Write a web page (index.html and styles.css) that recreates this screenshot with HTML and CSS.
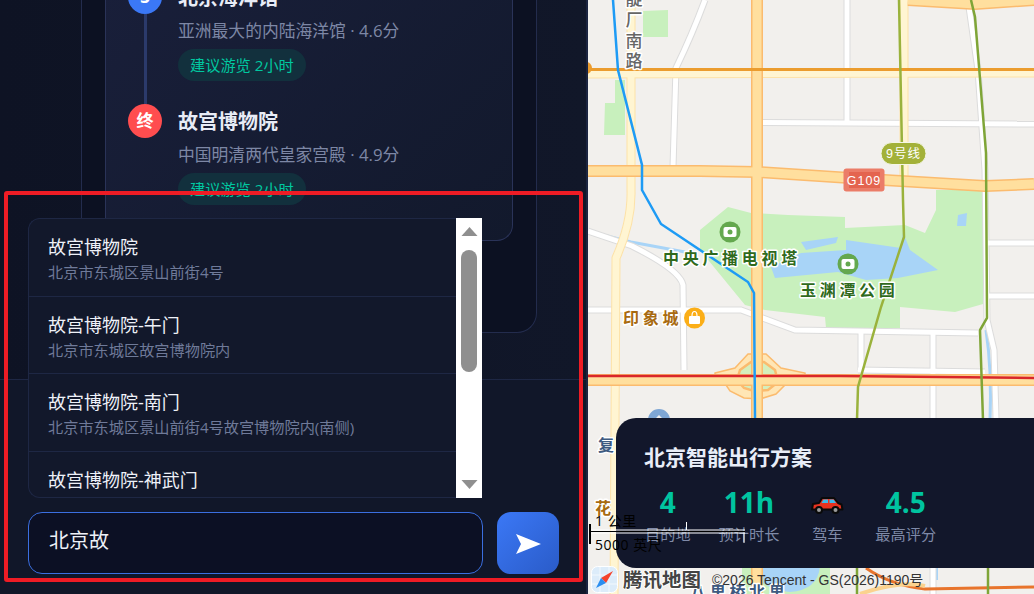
FILE: index.html
```html
<!DOCTYPE html>
<html>
<head>
    <title>北京智能出行方案</title>
    <link rel="stylesheet" href="styles.css">
</head>
<body>
    <div class="app">
        <div class="panel">
            <div class="chat-area">
                <div class="outer-card">
                    <div class="route-card">
                        <div class="stop">
                            <div class="stop-marker">
                                <div class="stop-dot">3</div>
                                <div class="stop-line"></div>
                            </div>
                            <div class="stop-info">
                                <h3>北京海洋馆</h3>
                                <p>亚洲最大的内陆海洋馆 · 4.6分</p>
                                <span class="tag">建议游览 2小时</span>
                            </div>
                        </div>
                        <div class="stop">
                            <div class="stop-marker">
                                <div class="stop-dot stop-dot-end">终</div>
                            </div>
                            <div class="stop-info">
                                <h3>故宫博物院</h3>
                                <p>中国明清两代皇家宫殿 · 4.9分</p>
                                <span class="tag">建议游览 2小时</span>
                            </div>
                        </div>
                    </div>
                </div>
            </div>

            <div class="input-area">
                <div class="suggest-box">
                    <div class="suggest-list">
                        <div class="suggest-item">
                            <div class="suggest-name">故宫博物院</div>
                            <div class="suggest-addr">北京市东城区景山前街4号</div>
                        </div>
                        <div class="suggest-item">
                            <div class="suggest-name">故宫博物院-午门</div>
                            <div class="suggest-addr">北京市东城区故宫博物院内</div>
                        </div>
                        <div class="suggest-item">
                            <div class="suggest-name">故宫博物院-南门</div>
                            <div class="suggest-addr">北京市东城区景山前街4号故宫博物院内(南侧)</div>
                        </div>
                        <div class="suggest-item">
                            <div class="suggest-name">故宫博物院-神武门</div>
                            <div class="suggest-addr">北京市东城区景山前街4号</div>
                        </div>
                    </div>
                    <div class="scrollbar">
                        <svg class="scroll-arrow" viewBox="0 0 16 9"><path d="M8 0 L16 9 L0 9 Z"/></svg>
                        <div class="scroll-track"><div class="scroll-thumb"></div></div>
                        <svg class="scroll-arrow" viewBox="0 0 16 9"><path d="M0 0 L16 0 L8 9 Z"/></svg>
                    </div>
                </div>
                <div class="input-row">
                    <div class="text-input">北京故</div>
                    <button class="send-btn">
                        <svg viewBox="0 0 25 20" width="25" height="20"><path d="M0 0 L25 10 L0 20 L5 10 Z"/></svg>
                    </button>
                </div>
            </div>
            <div class="panel-edge"></div>
        </div>

        <div class="map">
            <svg class="map-canvas" viewBox="588 0 446 594" width="446" height="594">
                <!-- parks and water -->
                <g class="park">
                    <path d="M643 11 L668 10 L668 37 L643 37 Z"/>
                    <path d="M605 103 L615 103 L615 80 L625 80 L625 135 L604 135 Z"/>
                    <path d="M700 230 L728 207 L751 213 L788 215 L845 217 L845 228 L905 225 L925 233 L936 210 L936 190 L983 190 L983 304 L955 312 L900 307 L900 328 L826 328 L825 317 L765 310 L745 305 L700 250 Z"/>
                    <path d="M742 560 L830 568 L830 594 L742 594 Z"/>
                </g>
                <g class="water">
                    <path d="M801 242 L838 237 L836 243 L806 250 Z"/>
                    <path d="M846 240 L901 248 L903 232 L910 250 L938 270 L898 278 L866 280 L838 272 L775 278 L771 267 L801 253 L846 250 Z"/>
                    <path d="M958 215 L967 213 L966 226 L957 226 Z"/>
                    <path d="M932 565 L938 565 L938 580 L932 580 Z"/>
                    <path d="M750 566 L820 566 Q818 590 790 592 Q760 590 750 566 Z"/>
                </g>
                <path class="canal" d="M591 232 L631 242 L685 252"/>
                <path class="canal" d="M986 330 Q992 370 990 420"/>

                <!-- white streets -->
                <g class="street-case">
                    <path d="M705 0 Q692 35 676 68 L673 167"/>
                    <path d="M847 0 L847 122"/>
                    <path d="M763 122.5 L1034 124"/>
                    <path d="M968 0 L978 70 L985 170 L987 320 L994 350 L996 418"/>
                    <path d="M588 231 L632 246 Q680 270 683 285 L684 370"/>
                    <path d="M588 310 L741 310 L795 330 L978 333"/>
                    <path d="M861 333 L861 370"/>
                    <path d="M933 333 L933 420"/>
                    <path d="M858 370 L985 372"/>
                    <path d="M987 243 L1034 243"/>
                    <path d="M987 296 L1034 296"/>
                    <path d="M933 568 L933 594"/>
                </g>
                <g class="street">
                    <path d="M705 0 Q692 35 676 68 L673 167"/>
                    <path d="M847 0 L847 122"/>
                    <path d="M763 122.5 L1034 124"/>
                    <path d="M968 0 L978 70 L985 170 L987 320 L994 350 L996 418"/>
                    <path d="M588 231 L632 246 Q680 270 683 285 L684 370"/>
                    <path d="M588 310 L741 310 L795 330 L978 333"/>
                    <path d="M861 333 L861 370"/>
                    <path d="M933 333 L933 420"/>
                    <path d="M858 370 L985 372"/>
                    <path d="M987 243 L1034 243"/>
                    <path d="M987 296 L1034 296"/>
                    <path d="M933 568 L933 594"/>
                </g>

                <!-- yellow roads -->
                <g class="road-pale-case">
                    <path d="M631 0 L631 190 Q632 222 616 258 L614 594"/>
                    <path d="M904 0 L904 180"/>
                    <path d="M588 74 L1034 73"/>
                </g>
                <g class="road-pale">
                    <path d="M631 0 L631 190 Q632 222 616 258 L614 594"/>
                    <path d="M904 0 L904 180"/>
                    <path d="M588 74 L1034 73"/>
                </g>

                <!-- roundabout -->
                <path class="ring-outer" d="M715 373 L735 368 L748 354 L766 354 L781 368 L805 373 L805 380 L788 382 L776 394 L760 399 L744 398 L730 391 L724 382 L715 380 Z"/>
                <path class="ring-inner" d="M740 370 L751 362 L764 362 L775 370 L778 382 L768 390 L754 391 L744 388 L737 380 Z"/>

                <g class="road-case">
                    <path d="M588 171 L700 171 L757 172 L850 178 L985 186 L1034 184"/>
                    <path d="M908 0 L975 4 L1034 0"/>
                    <path d="M588 380 L1034 380"/>
                    <path d="M757 0 L757 594"/>
                </g>
                <g class="road">
                    <path d="M588 171 L700 171 L757 172 L850 178 L985 186 L1034 184"/>
                    <path d="M908 0 L975 4 L1034 0"/>
                    <path d="M588 380 L1034 380"/>
                    <path d="M757 0 L757 594"/>
                </g>
                <path class="road-orange" d="M588 69.5 L1034 69.5"/>
                <path class="road-red" d="M588 376 L840 376 L1034 378"/>
                <path class="road-deep" d="M866 568 Q890 585 925 589 L1034 587"/>
                <path class="road-thin" d="M860 594 Q900 580 925 586"/>

                <!-- subway lines -->
                <path class="line-blue" d="M613 0 L618 70 L642 165 L642 190 L661 224 L748 282 L754 293 L755 418"/>
                <path class="line-green" d="M899 0 L903 200 L904 237 L881 307 L858 387 L857 420"/>
                <path class="line-olive" d="M971 0 L975 17 L986 153 L987 318 L980 330 L983 420"/>
                <path class="line-olive" d="M857 568 L857 594"/>
                <path class="line-olive" d="M988 568 L988 594"/>

                <!-- poi -->
                <circle class="poi-dot" cx="586" cy="68" r="6"/>
                <g class="poi-green">
                    <circle cx="730" cy="232" r="10.5"/>
                    <circle cx="848" cy="264" r="10.5"/>
                </g>
                <g class="poi-camera">
                    <rect x="723.5" y="227" width="13" height="10" rx="2"/>
                    <rect x="841.5" y="259" width="13" height="10" rx="2"/>
                </g>
                <g class="poi-lens">
                    <circle cx="730" cy="232" r="2.5"/>
                    <circle cx="848" cy="264" r="2.5"/>
                </g>
                <circle class="poi-shop" cx="694.5" cy="318" r="10.5"/>
                <rect class="poi-bag" x="689" y="316" width="11" height="8" rx="1"/>
                <path class="poi-bag-handle" d="M692 316 Q692 311.5 694.5 311.5 Q697 311.5 697 316"/>
                <path class="poi-pin" d="M648 420 A11 11 0 0 1 670 420 L664 420 L659 415 L654 420 Z"/>

                <!-- labels -->
                <g class="label label-grey">
                    <text x="634" y="5">靛</text>
                    <text x="634" y="26">厂</text>
                    <text x="634" y="47">南</text>
                    <text x="634" y="67">路</text>
                </g>
                <text class="label label-green" x="663" y="264">中央广播电视塔</text>
                <text class="label label-green" x="800" y="296">玉渊潭公园</text>
                <text class="label label-brown" x="623" y="324">印象城</text>
                <text class="label label-navy" x="598" y="451">复</text>
                <text class="label label-brown" x="595" y="514">花</text>
                <text class="label label-navy" x="690" y="598">八里桥北里</text>

                <!-- badges -->
                <rect class="badge-line" x="881" y="142.5" width="45" height="22" rx="11"/>
                <text class="badge-text" x="903.5" y="158">9号线</text>
                <rect class="badge-road" x="843.5" y="168.5" width="41" height="23" rx="3"/>
                <rect class="badge-road-inner" x="849" y="172" width="31" height="16"/>
                <text class="badge-text" x="864" y="185">G109</text>
            </svg>

            <div class="info-card">
                <h2>北京智能出行方案</h2>
                <div class="stats">
                    <div class="stat">
                        <div class="stat-value">4</div>
                        <div class="stat-label">目的地</div>
                    </div>
                    <div class="stat">
                        <div class="stat-value">11h</div>
                        <div class="stat-label">预计时长</div>
                    </div>
                    <div class="stat stat-car">
                        <div class="stat-value">
                            <svg class="car" viewBox="0 0 34 19" width="34" height="19">
                                <path class="car-body" d="M3 9 L9 8 L12 3 L24 3 L28 8 L31.500 9.500 L32.500 14.500 L2 14.500 Z"/>
                                <path class="car-window" d="M11.500 8 L13.500 4.500 L18 4.500 L18 8 Z"/>
                                <path class="car-window" d="M19.500 4.500 L23.500 4.500 L26 8 L19.500 8 Z"/>
                                <circle class="car-wheel" cx="9" cy="15" r="3"/>
                                <circle class="car-wheel" cx="25.500" cy="15" r="3"/>
                            </svg>
                        </div>
                        <div class="stat-label">驾车</div>
                    </div>
                    <div class="stat">
                        <div class="stat-value">4.5</div>
                        <div class="stat-label">最高评分</div>
                    </div>
                </div>
            </div>

            <svg class="scale" viewBox="0 0 160 34" width="160" height="34">
                <path class="scale-halo" d="M2 11 L157 11 M2 14 L157 14 M98.500 3 L98.500 11 M156 14 L156 24"/>
                <path class="scale-line" d="M2 12.500 L157 12.500"/>
                <path class="scale-end" d="M2 5 L2 25"/>
            </svg>
            <div class="scale-text scale-km">1 公里</div>
            <div class="scale-text scale-ft">5000 英尺</div>

            <div class="map-logo">
                <svg viewBox="0 0 27 27" width="27" height="27">
                    <rect class="logo-bg" x="0.500" y="0.500" width="26" height="26" rx="6"/>
                    <path class="logo-grid" d="M9 1 L9 26 M18 1 L18 26 M1 9 L26 9 M1 18 L26 18"/>
                    <path class="logo-red" d="M22 5 L10 12 L15 17 Z"/>
                    <path class="logo-blue" d="M5 22 L10 12 L15 17 Z"/>
                </svg>
                <span class="logo-name">腾讯地图</span>
            </div>
            <div class="copyright">©2026 Tencent - GS(2026)1190号</div>
        </div>

        <div class="highlight"></div>
    </div>
</body>
</html>
```

FILE: styles.css
```css
* {
    margin: 0;
    padding: 0;
    box-sizing: border-box;
    font-family: "Open Sans", "Noto Sans CJK SC", sans-serif;
}

body {
    background: #111729;
    overflow: hidden;
}

.app {
    position: relative;
    display: flex;
    width: 1034px;
    height: 594px;
    overflow: hidden;
}

/* left panel */
.panel {
    position: relative;
    width: 588px;
    height: 594px;
    display: flex;
    flex-direction: column;
    background: #111729;
}

.panel-edge {
    position: absolute;
    top: 0;
    right: 0;
    width: 2px;
    height: 100%;
    background: #1b2440;
}

.chat-area {
    height: 379px;
    overflow: hidden;
    padding-left: 81px;
    padding-right: 51px;
    background: linear-gradient(90deg, #0e1324, #111729);
}

.outer-card {
    display: flow-root;
    height: 333px;
    padding: 0 23px;
    background: #0c1122;
    border: 1px solid #232c4d;
    border-top: none;
    border-radius: 0 0 20px 20px;
}

.route-card {
    height: 261px;
    margin-top: -20px;
    padding-left: 22px;
    background: linear-gradient(135deg, #191f3a, #12192c);
    border: 1px solid #2a3358;
    border-top: none;
    border-radius: 0 0 16px 16px;
}

.stop {
    display: flex;
    gap: 16px;
    height: 124px;
}

.stop-marker {
    display: flex;
    flex-direction: column;
    align-items: center;
    width: 34px;
}

.stop-dot {
    flex: none;
    width: 34px;
    height: 34px;
    border-radius: 50%;
    background: #3b78f6;
    color: white;
    font-size: 17px;
    font-weight: 700;
    line-height: 34px;
    text-align: center;
}

.stop-dot-end {
    background: #ff4d4f;
}

.stop-line {
    flex: 1;
    width: 3px;
    background: #2b3a6b;
}

.stop-info h3 {
    height: 34px;
    padding-top: 1px;
    color: #e8ecf6;
    font-size: 20px;
    font-weight: 700;
    line-height: 34px;
}

.stop-info p {
    margin-top: 5px;
    color: #7d87a5;
    font-size: 16.800px;
    line-height: 24px;
}

.tag {
    display: inline-block;
    margin-top: 6px;
    height: 32px;
    padding: 0 12px;
    border-radius: 16px;
    background: #12303d;
    color: #00c8a0;
    font-size: 15.200px;
    line-height: 32px;
    vertical-align: top;
}

/* input area */
.input-area {
    position: relative;
    flex: 1;
    display: flex;
    flex-direction: column;
    justify-content: flex-end;
    padding: 0 29px 20px 28px;
    border-top: 1px solid #1e2744;
}

.suggest-box {
    position: absolute;
    left: 28px;
    top: -162px;
    display: flex;
    width: 454px;
    height: 280px;
}

.suggest-list {
    flex: 1;
    overflow: hidden;
    background: #12182b;
    border: 1px solid #1e2744;
    border-right: none;
    border-radius: 12px 0 0 12px;
}

.suggest-item {
    height: 77.500px;
    padding: 15px 19px 0;
    border-bottom: 1px solid #1e2744;
}

.suggest-name {
    color: #eef1f8;
    font-size: 18px;
    line-height: 26px;
}

.suggest-addr {
    margin-top: 1px;
    color: #6f7a99;
    font-size: 15.200px;
    line-height: 22px;
}

.scrollbar {
    width: 26px;
    display: flex;
    flex-direction: column;
    align-items: center;
    background: white;
}

.scroll-arrow {
    flex: none;
    width: 17px;
    height: 9px;
    margin: 9px 0;
    fill: #8f8f8f;
}

.scroll-track {
    flex: 1;
    width: 100%;
    padding: 5px 5px 0;
}

.scroll-thumb {
    width: 16px;
    height: 122px;
    border-radius: 8px;
    background: #8f8f8f;
}

.input-row {
    display: flex;
    gap: 14px;
}

.text-input {
    flex: 1;
    height: 62px;
    padding: 0 20px;
    border: 1px solid #3b6fe0;
    border-radius: 14px;
    background: #0c1024;
    color: #eef1f8;
    font-size: 20px;
    line-height: 56px;
}

.send-btn {
    width: 62px;
    height: 62px;
    border: none;
    border-radius: 14px;
    background: linear-gradient(135deg, #3b78f6, #2a5bc8);
    display: flex;
    align-items: center;
    justify-content: center;
}

.send-btn svg {
    fill: white;
    margin-top: 2px;
}

/* map */
.map {
    position: relative;
    flex: 1;
    background: #f2f0ed;
}

.map-canvas {
    display: block;
    overflow: hidden;
}

.park path {
    fill: #c8f0bd;
}

.water path {
    fill: #a8d4f7;
}

.canal {
    fill: none;
    stroke: #a8d4f7;
    stroke-width: 3;
}

.street-case path, .street path,
.road-pale-case path, .road-pale path,
.road-case path, .road path,
.road-orange, .road-red, .road-deep, .road-thin,
.line-blue, .line-green, .line-olive {
    fill: none;
}

.street-case path {
    stroke: #dcdcdc;
    stroke-width: 7;
}

.street path {
    stroke: white;
    stroke-width: 5;
}

.road-pale-case path {
    stroke: #fde2a8;
    stroke-width: 9;
}

.road-pale path {
    stroke: #fff5d2;
    stroke-width: 7;
}

.road-case path {
    stroke: #fbbb6e;
    stroke-width: 12;
}

.road path {
    stroke: #ffdf9e;
    stroke-width: 9;
}

.road-orange {
    stroke: #eb9c2e;
    stroke-width: 3;
}

.road-red {
    stroke: #d9262a;
    stroke-width: 2.500;
}

.road-deep {
    stroke: #e8742c;
    stroke-width: 3;
}

.road-thin {
    stroke: #fbd28e;
    stroke-width: 4;
}

.ring-outer {
    fill: #ffe6b5;
    stroke: #fbbb6e;
    stroke-width: 1.500;
}

.ring-inner {
    fill: #d5eebc;
    stroke: #fbbb6e;
    stroke-width: 2.500;
}

.line-blue {
    stroke: #1e9bf5;
    stroke-width: 2.500;
}

.line-green {
    stroke: #9ab23c;
    stroke-width: 2.500;
}

.line-olive {
    stroke: #7fa537;
    stroke-width: 2.500;
}

.poi-dot {
    fill: #eb9c2e;
}

.poi-green circle {
    fill: #64a84e;
}

.poi-camera rect {
    fill: white;
}

.poi-lens circle {
    fill: #64a84e;
}

.poi-shop {
    fill: #fbae17;
}

.poi-bag {
    fill: white;
}

.poi-bag-handle {
    fill: none;
    stroke: white;
    stroke-width: 1.200;
}

.poi-pin {
    fill: #7ea6d4;
}

.label {
    font-family: "Noto Sans CJK SC", sans-serif;
    font-size: 16px;
    font-weight: 700;
    letter-spacing: 3.700px;
    paint-order: stroke;
    stroke: white;
    stroke-width: 3px;
    stroke-linejoin: round;
}

.label-grey {
    font-size: 17px;
    font-weight: 500;
    letter-spacing: 0;
}

.label-grey text {
    fill: #666;
    text-anchor: middle;
}

.label-green {
    fill: #2f6a1c;
}

.label-brown {
    fill: #a86a10;
}

.label-navy {
    fill: #3d5a80;
}

.badge-line {
    fill: #a3b139;
    stroke: #f4f6e6;
    stroke-width: 1;
}

.badge-road {
    fill: #eb7c68;
}

.badge-road-inner {
    fill: #e4644f;
}

.badge-text {
    fill: white;
    font-family: "Liberation Sans", "Noto Sans CJK SC", sans-serif;
    font-size: 12.500px;
    letter-spacing: 1px;
    text-anchor: middle;
}

.info-card {
    position: absolute;
    left: 28px;
    top: 418px;
    width: 440px;
    height: 150px;
    padding: 23px 28px;
    background: #12172b;
    border-radius: 20px;
}

.info-card h2 {
    color: #e8edf8;
    font-size: 21px;
    font-weight: 700;
    line-height: 32px;
}

.stats {
    display: flex;
    gap: 28px;
    margin-top: 9px;
    padding-left: 1px;
}

.stat {
    display: flex;
    flex-direction: column;
    align-items: center;
}

.stat-car {
    width: 40px;
}

.stat-value {
    height: 40px;
    color: #00c4a0;
    font-size: 28px;
    font-weight: 700;
    line-height: 40px;
}

.stat-label {
    color: #7f8aa8;
    font-size: 15.200px;
    line-height: 24px;
}

.car {
    display: block;
    margin-top: 13px;
}

.car-body {
    fill: #e8321f;
    stroke: #0a0a0a;
    stroke-width: 2;
    stroke-linejoin: round;
}

.car-window {
    fill: #3fb8e8;
}

.car-wheel {
    fill: #9a9a9a;
    stroke: #0a0a0a;
    stroke-width: 2;
}

.scale {
    position: absolute;
    left: 0;
    top: 519px;
    fill: none;
}

.scale-halo {
    stroke: white;
    stroke-width: 1;
}

.scale-line {
    stroke: black;
    stroke-width: 1;
}

.scale-end {
    stroke: black;
    stroke-width: 2;
}

.scale-text {
    position: absolute;
    left: 7px;
    color: #000;
    font-size: 14px;
    line-height: 18px;
    letter-spacing: 0.500px;
}

.scale-km {
    top: 512px;
}

.scale-ft {
    top: 536px;
}

.map-logo {
    position: absolute;
    left: 3px;
    top: 566px;
    display: flex;
    align-items: center;
    gap: 5px;
}

.logo-bg {
    fill: #dcecfa;
    stroke: white;
    stroke-width: 1;
}

.logo-grid {
    fill: none;
    stroke: #f2f8fd;
    stroke-width: 1;
}

.logo-red {
    fill: #f4432c;
}

.logo-blue {
    fill: #2b8ef0;
}

.logo-name {
    color: #444;
    font-size: 19.500px;
    font-weight: 700;
    line-height: 27px;
    text-shadow: 1px 0 white, -1px 0 white, 0 1px white, 0 -1px white;
}

.copyright {
    position: absolute;
    left: 124px;
    top: 572px;
    color: #333;
    font-family: "Liberation Sans", "Noto Sans CJK SC", sans-serif;
    font-size: 14px;
    line-height: 17px;
}

/* red annotation frame */
.highlight {
    position: absolute;
    left: 4px;
    top: 191px;
    width: 579px;
    height: 391px;
    border: 4px solid #ee1c25;
    border-radius: 3px;
}
```
